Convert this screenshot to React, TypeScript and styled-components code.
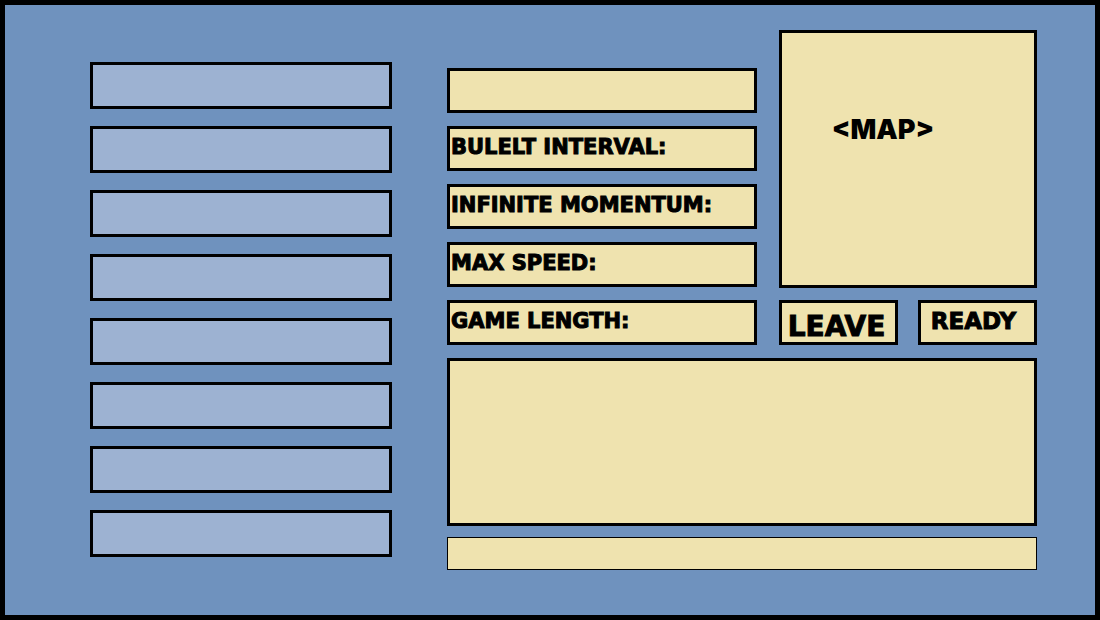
import React from "react";
import styled, { createGlobalStyle } from "styled-components";

const GlobalStyle = createGlobalStyle`
  *, *::before, *::after { box-sizing: border-box; }
  body { margin: 0; background: #000; }
`;

const wide = `"DejaVu Sans", Verdana, sans-serif`;
const heavy = `Inter, "Arial Black", sans-serif`;

const Lobby = styled.main`
  display: grid;
  grid-template-columns: minmax(0, 302fr) minmax(0, 590fr);
  column-gap: 55px;
  align-items: start;
  min-height: 100vh;
  padding: 25px 58px 45px 85px;
  border: 5px solid #000;
  background: #6f92be;
  color: #000;
`;

const PlayerList = styled.ul`
  display: flex;
  flex-direction: column;
  gap: 17px;
  margin: 32px 0 0;
  padding: 0;
  list-style: none;
`;

const PlayerSlot = styled.li`
  height: 47px;
  border: 3px solid #000;
  background: #9db2d2;
`;

const GamePanel = styled.div`
  display: flex;
  flex-direction: column;
`;

const Setup = styled.div`
  display: grid;
  grid-template-columns: minmax(0, 310fr) minmax(0, 258fr);
  column-gap: 22px;
  align-items: end;
`;

const Settings = styled.form`
  display: flex;
  flex-direction: column;
  gap: 13px;
`;

const SettingRow = styled.div`
  display: flex;
  height: 45px;
  border: 3px solid #000;
  background: #efe3af;
`;

const SettingLabel = styled.label`
  flex: none;
  padding: 5px 0 0 1px;
  font: 700 21px/26px ${wide};
  -webkit-text-stroke: 1px #000;
  white-space: nowrap;
`;

const SettingInput = styled.input`
  flex: 1;
  min-width: 0;
  padding: 0 4px;
  border: 0;
  background: transparent;
  font: 700 21px/26px ${wide};
`;

const MapColumn = styled.div`
  display: flex;
  flex-direction: column;
  gap: 12px;
`;

const MapPreview = styled.section`
  aspect-ratio: 1;
  padding: 81px 50px 0 0;
  border: 3px solid #000;
  background: #efe3af;
  font: 900 27px/32px ${heavy};
  text-align: center;
`;

const Actions = styled.div`
  display: grid;
  grid-template-columns: 1fr 1fr;
  gap: 20px;
`;

const ActionButton = styled.button<{ $large?: boolean }>`
  height: 45px;
  padding: ${(p) => (p.$large ? "8px 4px 0 0" : "0 8px 4px 0")};
  border: 3px solid #000;
  border-radius: 0;
  background: #efe3af;
  color: #000;
  font: 700 ${(p) => (p.$large ? 28 : 23)}px/30px ${wide};
  -webkit-text-stroke: 1px #000;
  cursor: pointer;
`;

const ChatLog = styled.section`
  height: 168px;
  margin-top: 13px;
  border: 3px solid #000;
  background: #efe3af;
`;

const ChatInput = styled.input`
  width: 100%;
  height: 33px;
  margin-top: 11px;
  padding: 0 8px;
  border: 1px solid #000;
  border-radius: 0;
  background: #efe3af;
  font: 700 16px/20px ${wide};
`;

const settings = [
  { id: "bullet-interval", label: "BULELT INTERVAL:" },
  { id: "infinite-momentum", label: "INFINITE MOMENTUM:" },
  { id: "max-speed", label: "MAX SPEED:" },
  { id: "game-length", label: "GAME LENGTH:" },
];

const slots = Array.from({ length: 8 }, (_, i) => i);

export default function App() {
  return (
    <>
      <GlobalStyle />
      <Lobby>
        <PlayerList aria-label="Players">
          {slots.map((slot) => (
            <PlayerSlot key={slot} />
          ))}
        </PlayerList>
        <GamePanel>
          <Setup>
            <Settings aria-label="Game settings">
              <SettingRow>
                <SettingInput type="text" aria-label="Game name" />
              </SettingRow>
              {settings.map(({ id, label }) => (
                <SettingRow key={id}>
                  <SettingLabel htmlFor={id}>{label}</SettingLabel>
                  <SettingInput id={id} type="text" />
                </SettingRow>
              ))}
            </Settings>
            <MapColumn>
              <MapPreview aria-label="Map">&lt;MAP&gt;</MapPreview>
              <Actions>
                <ActionButton type="button" $large>
                  LEAVE
                </ActionButton>
                <ActionButton type="button">READY</ActionButton>
              </Actions>
            </MapColumn>
          </Setup>
          <ChatLog role="log" aria-label="Chat" />
          <ChatInput type="text" aria-label="Chat message" />
        </GamePanel>
      </Lobby>
    </>
  );
}
